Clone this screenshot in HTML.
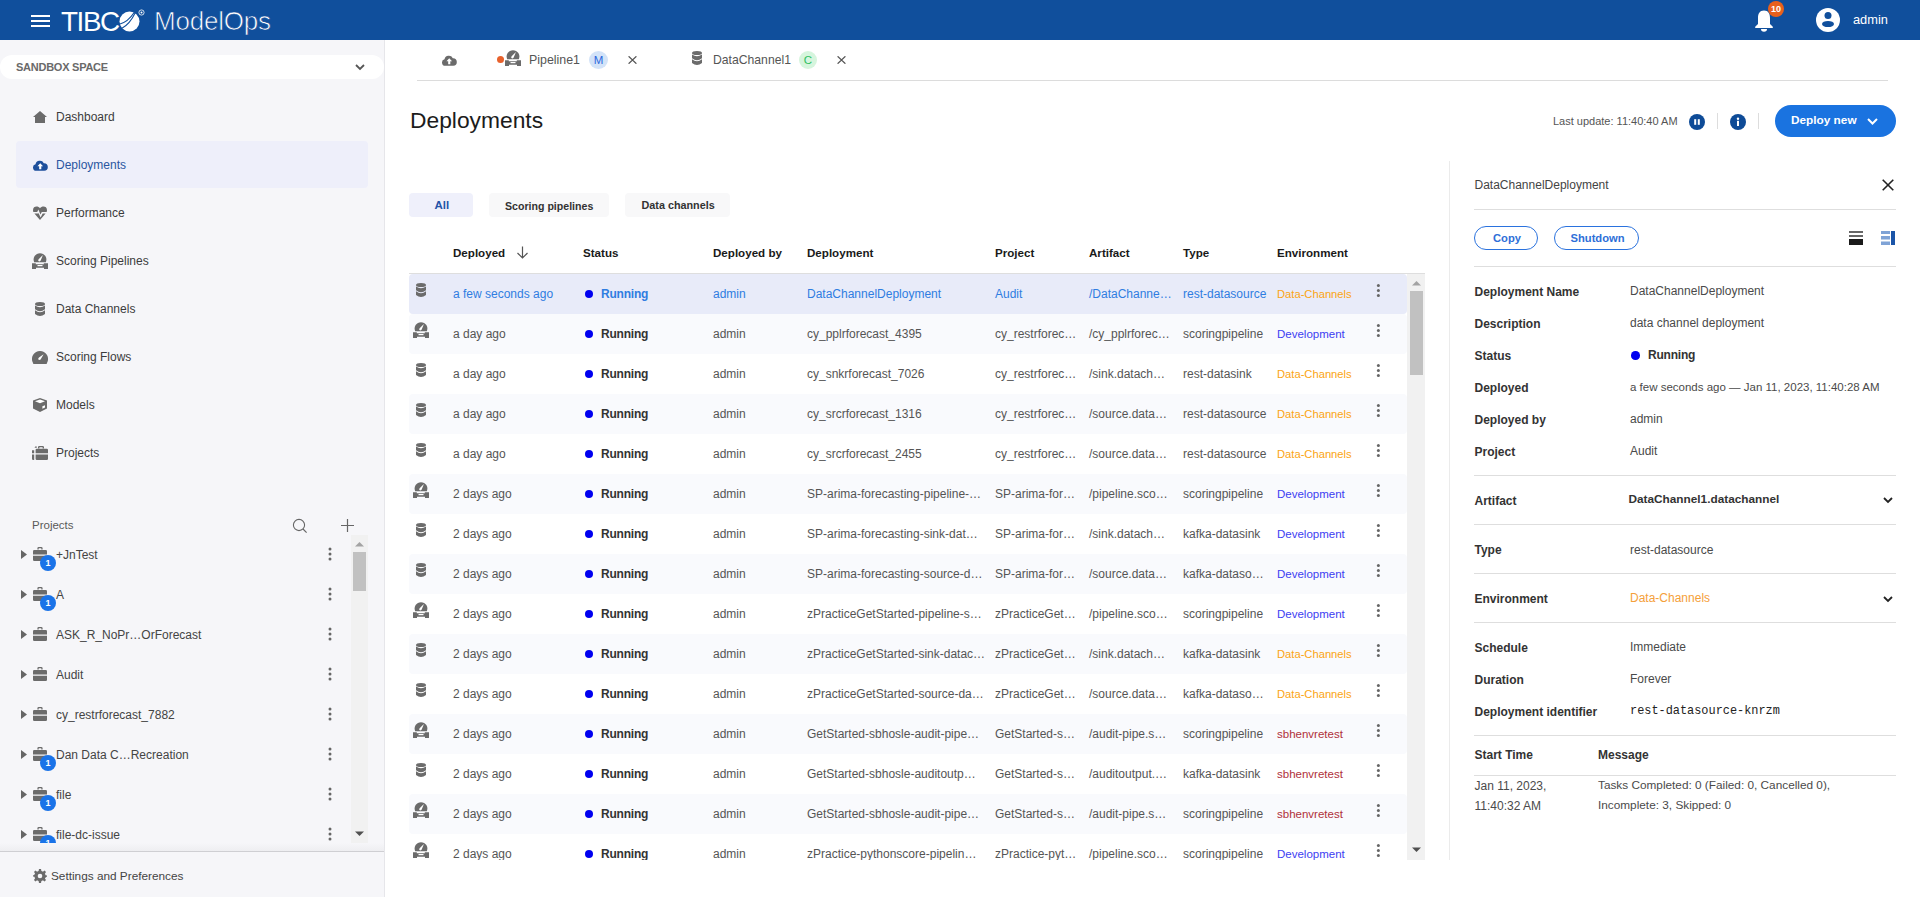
<!DOCTYPE html>
<html><head><meta charset="utf-8">
<style>
*{box-sizing:border-box;margin:0;padding:0}
html,body{width:1920px;height:897px;overflow:hidden;background:#fff;font-family:"Liberation Sans",sans-serif;color:#333}
.a{position:absolute;white-space:nowrap}
</style></head><body>
<div class="a" style="left:0;top:0;width:1920px;height:40px;background:#104f9c"></div>
<div class="a" style="left:31px;top:15px;width:19px;height:2px;background:#fff"></div>
<div class="a" style="left:31px;top:20px;width:19px;height:2px;background:#fff"></div>
<div class="a" style="left:31px;top:25px;width:19px;height:2px;background:#fff"></div>
<div class="a" style="left:61px;top:8.47px;font-size:27.8px;line-height:27.8px;font-weight:400;color:#fff;letter-spacing:-1.4px">TIBC</div>
<svg class="a" style="left:119px;top:11px" width="22" height="21" viewBox="0 0 22 21"><circle cx="10.5" cy="10.5" r="10" fill="#fff"/><path d="M0.3 13.2 Q9 11 15.3 1.2" stroke="#104f9c" stroke-width="1.1" fill="none"/><path d="M2.6 17.6 Q11 13 16.2 1.8" stroke="#104f9c" stroke-width="1.1" fill="none"/></svg>
<svg class="a" style="left:138px;top:9px" width="7" height="7" viewBox="0 0 7 7"><circle cx="3.5" cy="3.5" r="2.6" fill="none" stroke="#fff" stroke-width="0.8"/><circle cx="3.5" cy="3.5" r="1" fill="#fff"/></svg>
<div class="a" style="left:154px;top:7.99px;font-size:26px;line-height:26px;font-weight:400;color:#fff;letter-spacing:-0.2px;-webkit-text-stroke:0.7px #104f9c">ModelOps</div>
<svg class="a" style="left:1755px;top:10px" width="18" height="22" viewBox="0 0 18 22"><path fill="#fff" d="M9 0.5C4.6 0.5 3 3.8 3 8V14L0.2 16.8V18H17.8V16.8L15 14V8C15 3.8 13.4 0.5 9 0.5Z"/><path fill="#fff" d="M6 19H12Q12 21.8 9 21.8T6 19Z"/></svg>
<div class="a" style="left:1768px;top:1px;width:16px;height:16px;border-radius:50%;background:#e8601c;color:#fff;font-size:9px;font-weight:700;line-height:16px;text-align:center">10</div>
<svg class="a" style="left:1816px;top:8px" width="24" height="24" viewBox="0 0 24 24"><circle cx="12" cy="12" r="12" fill="#fff"/><circle cx="12" cy="7.6" r="3.5" fill="#104f9c"/><ellipse cx="12" cy="16" rx="6" ry="3.1" fill="#104f9c"/></svg>
<div class="a" style="left:1853px;top:14.36px;font-size:12.8px;line-height:12.8px;font-weight:400;color:#fff;">admin</div>
<div class="a" style="left:0;top:40px;width:385px;height:857px;background:#f6f6f9;border-right:1px solid #e6e6ea"></div>
<div class="a" style="left:0;top:55px;width:384px;height:24px;border-radius:12px;background:#fff"></div>
<div class="a" style="left:16px;top:61.69px;font-size:11px;line-height:11px;font-weight:700;color:#6a6a6a;letter-spacing:-0.25px">SANDBOX SPACE</div>
<svg class="a" style="left:355px;top:64px" width="10" height="7" viewBox="0 0 10 7"><path d="M1 1L5 5L9 1" stroke="#555" stroke-width="1.8" fill="none"/></svg>
<div class="a" style="left:16px;top:141px;width:352px;height:47px;border-radius:4px;background:#eeeffa"></div>
<div class="a" style="left:56px;top:110.84px;font-size:12px;line-height:12px;font-weight:400;color:#3c3c3c;">Dashboard</div>
<div class="a" style="left:56px;top:158.84px;font-size:12px;line-height:12px;font-weight:400;color:#2a56a0;">Deployments</div>
<div class="a" style="left:56px;top:206.84px;font-size:12px;line-height:12px;font-weight:400;color:#3c3c3c;">Performance</div>
<div class="a" style="left:56px;top:254.84px;font-size:12px;line-height:12px;font-weight:400;color:#3c3c3c;">Scoring Pipelines</div>
<div class="a" style="left:56px;top:302.84px;font-size:12px;line-height:12px;font-weight:400;color:#3c3c3c;">Data Channels</div>
<div class="a" style="left:56px;top:350.84px;font-size:12px;line-height:12px;font-weight:400;color:#3c3c3c;">Scoring Flows</div>
<div class="a" style="left:56px;top:398.84px;font-size:12px;line-height:12px;font-weight:400;color:#3c3c3c;">Models</div>
<div class="a" style="left:56px;top:446.84px;font-size:12px;line-height:12px;font-weight:400;color:#3c3c3c;">Projects</div>
<svg class="a" style="left:33px;top:111px" width="14" height="12" viewBox="0 0 14 12"><path fill="#6b6b6b" d="M7 0L14 6H12V12H2V6H0Z"/></svg>
<svg class="a" style="left:33px;top:160px" width="14.5" height="11" viewBox="0 0 15 11"><path fill="#1d4f9c" d="M3.4 11A3.4 3.4 0 0 1 2.6 4.3 4.6 4.6 0 0 1 11.2 3.2 3.9 3.9 0 0 1 11.6 11Z"/><path fill="#fff" d="M7.5 3.2L4.6 6.4H6.4V9.4H8.6V6.4H10.4Z"/></svg>
<svg class="a" style="left:33px;top:206px" width="14" height="14" viewBox="0 0 14 14"><path fill="#6b6b6b" d="M7 2.2C5.5 0 0 -0.5 0 4.2Q0 5.2 0.4 6H4.2L5.4 3.6L7.4 8.6L8.8 6H13.6Q14 5.2 14 4.2C14 -0.5 8.5 0 7 2.2Z"/><path fill="#6b6b6b" d="M1.4 7.4H5.3L5.5 7L7.6 11.4L9.7 7.4H12.6L7 14Z"/></svg>
<svg class="a" style="left:32px;top:253px" width="16" height="16" viewBox="0 0 16 16"><path fill="#6b6b6b" d="M2.15 9.2A6.4 6.4 0 1 1 13.85 9.2Z"/><path fill="#fff" d="M10.9 2.1L8.7 7.5Q7.6 8.9 6.4 8.1Q5.7 6.9 6.9 5.9Z"/><path fill="#6b6b6b" d="M0 10.2H3.8V11.2H11.8V10.2H16V16H12V14.8H4V16H0Z"/><rect x="5.5" y="12" width="5" height="1.2" fill="#fff"/></svg>
<svg class="a" style="left:35px;top:302px" width="10.0" height="14.0" viewBox="0 0 10 14"><ellipse cx="5" cy="2" rx="5" ry="2" fill="#6b6b6b"/><path fill="#6b6b6b" d="M0 3.4Q5 6.9 10 3.4V7.2Q5 11.2 0 7.2Z"/><path fill="#6b6b6b" d="M0 8.3Q5 12.2 10 8.3V12Q5 16 0 12Z"/></svg>
<svg class="a" style="left:32px;top:351px" width="16" height="13" viewBox="0 0 16 13"><path fill="#6b6b6b" d="M8 0A8 8 0 0 1 15.2 11.6L14.6 13H1.4L0.8 11.6A8 8 0 0 1 8 0Z"/><path fill="#fff" d="M11.6 3.2L8.6 8.6Q7 9.4 6.2 8.2Q6.2 7.2 7 6.6Z"/></svg>
<svg class="a" style="left:33px;top:398px" width="14" height="14" viewBox="0 0 14 14"><path fill="#6b6b6b" d="M7 0L14 2.6V10.6L7 14L0 10.6V2.6Z"/><path fill="#fff" d="M7 1.4L12 3.3L7 5.2L2 3.3Z"/><path fill="#fff" d="M9.4 8.2L12 7.2V9.6L9.4 10.8Z"/></svg>
<svg class="a" style="left:32px;top:446px" width="16" height="14" viewBox="0 0 16 14"><path fill="#6b6b6b" d="M6 2.6V1.3Q6 0 7.3 0H10.7Q12 0 12 1.3V2.6H10.6V1.3H7.4V2.6Z"/><path fill="#6b6b6b" d="M3.6 4Q3.6 2.8 4.8 2.8H14.8Q16 2.8 16 4V7.2H3.6Z"/><path fill="#6b6b6b" d="M3.6 8.4H16V12.8Q16 14 14.8 14H4.8Q3.6 14 3.6 12.8Z"/><path fill="#6b6b6b" d="M0 4.2H2.2V7.2H0Z M0 8.4H2.2V14H1.2Q0 14 0 12.8Z M3.2 0.6H4.8V1.8H2.6Z"/></svg>
<div class="a" style="left:32px;top:520.27px;font-size:11.5px;line-height:11.5px;font-weight:400;color:#5a5a5a;">Projects</div>
<svg class="a" style="left:292px;top:518px" width="16" height="16" viewBox="0 0 16 16"><circle cx="7" cy="7" r="5.6" stroke="#666" stroke-width="1.1" fill="none"/><path d="M11 11L14.6 14.6" stroke="#666" stroke-width="1.1"/></svg>
<svg class="a" style="left:341px;top:519px" width="13" height="13" viewBox="0 0 13 13"><path d="M6.5 0V13M0 6.5H13" stroke="#666" stroke-width="1.2"/></svg>
<div class="a" style="left:0;top:535px;width:384px;height:308px;overflow:hidden">
<svg class="a" style="left:21px;top:15px" width="6" height="9" viewBox="0 0 6 9"><path d="M0 0L6 4.5L0 9Z" fill="#666"/></svg>
<svg class="a" style="left:33px;top:12px" width="14" height="14" viewBox="0 0 14 14"><path fill="#6b6b6b" d="M4.4 2.6V1.3Q4.4 0 5.7 0H8.3Q9.6 0 9.6 1.3V2.6H8.3V1.3H5.7V2.6Z"/><path fill="#6b6b6b" d="M0 4.2Q0 2.9 1.3 2.9H12.7Q14 2.9 14 4.2V7.6H0Z"/><path fill="#6b6b6b" d="M0 8.7H14V12.7Q14 14 12.7 14H1.3Q0 14 0 12.7Z"/></svg>
<div class="a" style="left:40px;top:20px;width:16px;height:16px;border-radius:50%;background:#1a73e8;color:#fff;font-size:9px;font-weight:700;line-height:16px;text-align:center">1</div>
<div class="a" style="left:56px;top:13.84px;font-size:12px;line-height:12px;color:#444">+JnTest</div>
<svg class="a" style="left:327px;top:11px" width="6" height="16" viewBox="0 0 6 16"><g transform="translate(0.00,0.00)"><circle cx="3" cy="3" r="1.5" fill="#666"/><circle cx="3" cy="8" r="1.5" fill="#666"/><circle cx="3" cy="13" r="1.5" fill="#666"/></g></svg>
<svg class="a" style="left:21px;top:55px" width="6" height="9" viewBox="0 0 6 9"><path d="M0 0L6 4.5L0 9Z" fill="#666"/></svg>
<svg class="a" style="left:33px;top:52px" width="14" height="14" viewBox="0 0 14 14"><path fill="#6b6b6b" d="M4.4 2.6V1.3Q4.4 0 5.7 0H8.3Q9.6 0 9.6 1.3V2.6H8.3V1.3H5.7V2.6Z"/><path fill="#6b6b6b" d="M0 4.2Q0 2.9 1.3 2.9H12.7Q14 2.9 14 4.2V7.6H0Z"/><path fill="#6b6b6b" d="M0 8.7H14V12.7Q14 14 12.7 14H1.3Q0 14 0 12.7Z"/></svg>
<div class="a" style="left:40px;top:60px;width:16px;height:16px;border-radius:50%;background:#1a73e8;color:#fff;font-size:9px;font-weight:700;line-height:16px;text-align:center">1</div>
<div class="a" style="left:56px;top:53.84px;font-size:12px;line-height:12px;color:#444">A</div>
<svg class="a" style="left:327px;top:51px" width="6" height="16" viewBox="0 0 6 16"><g transform="translate(0.00,0.00)"><circle cx="3" cy="3" r="1.5" fill="#666"/><circle cx="3" cy="8" r="1.5" fill="#666"/><circle cx="3" cy="13" r="1.5" fill="#666"/></g></svg>
<svg class="a" style="left:21px;top:95px" width="6" height="9" viewBox="0 0 6 9"><path d="M0 0L6 4.5L0 9Z" fill="#666"/></svg>
<svg class="a" style="left:33px;top:92px" width="14" height="14" viewBox="0 0 14 14"><path fill="#6b6b6b" d="M4.4 2.6V1.3Q4.4 0 5.7 0H8.3Q9.6 0 9.6 1.3V2.6H8.3V1.3H5.7V2.6Z"/><path fill="#6b6b6b" d="M0 4.2Q0 2.9 1.3 2.9H12.7Q14 2.9 14 4.2V7.6H0Z"/><path fill="#6b6b6b" d="M0 8.7H14V12.7Q14 14 12.7 14H1.3Q0 14 0 12.7Z"/></svg>
<div class="a" style="left:56px;top:93.84px;font-size:12px;line-height:12px;color:#444">ASK_R_NoPr…OrForecast</div>
<svg class="a" style="left:327px;top:91px" width="6" height="16" viewBox="0 0 6 16"><g transform="translate(0.00,0.00)"><circle cx="3" cy="3" r="1.5" fill="#666"/><circle cx="3" cy="8" r="1.5" fill="#666"/><circle cx="3" cy="13" r="1.5" fill="#666"/></g></svg>
<svg class="a" style="left:21px;top:135px" width="6" height="9" viewBox="0 0 6 9"><path d="M0 0L6 4.5L0 9Z" fill="#666"/></svg>
<svg class="a" style="left:33px;top:132px" width="14" height="14" viewBox="0 0 14 14"><path fill="#6b6b6b" d="M4.4 2.6V1.3Q4.4 0 5.7 0H8.3Q9.6 0 9.6 1.3V2.6H8.3V1.3H5.7V2.6Z"/><path fill="#6b6b6b" d="M0 4.2Q0 2.9 1.3 2.9H12.7Q14 2.9 14 4.2V7.6H0Z"/><path fill="#6b6b6b" d="M0 8.7H14V12.7Q14 14 12.7 14H1.3Q0 14 0 12.7Z"/></svg>
<div class="a" style="left:56px;top:133.84px;font-size:12px;line-height:12px;color:#444">Audit</div>
<svg class="a" style="left:327px;top:131px" width="6" height="16" viewBox="0 0 6 16"><g transform="translate(0.00,0.00)"><circle cx="3" cy="3" r="1.5" fill="#666"/><circle cx="3" cy="8" r="1.5" fill="#666"/><circle cx="3" cy="13" r="1.5" fill="#666"/></g></svg>
<svg class="a" style="left:21px;top:175px" width="6" height="9" viewBox="0 0 6 9"><path d="M0 0L6 4.5L0 9Z" fill="#666"/></svg>
<svg class="a" style="left:33px;top:172px" width="14" height="14" viewBox="0 0 14 14"><path fill="#6b6b6b" d="M4.4 2.6V1.3Q4.4 0 5.7 0H8.3Q9.6 0 9.6 1.3V2.6H8.3V1.3H5.7V2.6Z"/><path fill="#6b6b6b" d="M0 4.2Q0 2.9 1.3 2.9H12.7Q14 2.9 14 4.2V7.6H0Z"/><path fill="#6b6b6b" d="M0 8.7H14V12.7Q14 14 12.7 14H1.3Q0 14 0 12.7Z"/></svg>
<div class="a" style="left:56px;top:173.84px;font-size:12px;line-height:12px;color:#444">cy_restrforecast_7882</div>
<svg class="a" style="left:327px;top:171px" width="6" height="16" viewBox="0 0 6 16"><g transform="translate(0.00,0.00)"><circle cx="3" cy="3" r="1.5" fill="#666"/><circle cx="3" cy="8" r="1.5" fill="#666"/><circle cx="3" cy="13" r="1.5" fill="#666"/></g></svg>
<svg class="a" style="left:21px;top:215px" width="6" height="9" viewBox="0 0 6 9"><path d="M0 0L6 4.5L0 9Z" fill="#666"/></svg>
<svg class="a" style="left:33px;top:212px" width="14" height="14" viewBox="0 0 14 14"><path fill="#6b6b6b" d="M4.4 2.6V1.3Q4.4 0 5.7 0H8.3Q9.6 0 9.6 1.3V2.6H8.3V1.3H5.7V2.6Z"/><path fill="#6b6b6b" d="M0 4.2Q0 2.9 1.3 2.9H12.7Q14 2.9 14 4.2V7.6H0Z"/><path fill="#6b6b6b" d="M0 8.7H14V12.7Q14 14 12.7 14H1.3Q0 14 0 12.7Z"/></svg>
<div class="a" style="left:40px;top:220px;width:16px;height:16px;border-radius:50%;background:#1a73e8;color:#fff;font-size:9px;font-weight:700;line-height:16px;text-align:center">1</div>
<div class="a" style="left:56px;top:213.84px;font-size:12px;line-height:12px;color:#444">Dan Data C…Recreation</div>
<svg class="a" style="left:327px;top:211px" width="6" height="16" viewBox="0 0 6 16"><g transform="translate(0.00,0.00)"><circle cx="3" cy="3" r="1.5" fill="#666"/><circle cx="3" cy="8" r="1.5" fill="#666"/><circle cx="3" cy="13" r="1.5" fill="#666"/></g></svg>
<svg class="a" style="left:21px;top:255px" width="6" height="9" viewBox="0 0 6 9"><path d="M0 0L6 4.5L0 9Z" fill="#666"/></svg>
<svg class="a" style="left:33px;top:252px" width="14" height="14" viewBox="0 0 14 14"><path fill="#6b6b6b" d="M4.4 2.6V1.3Q4.4 0 5.7 0H8.3Q9.6 0 9.6 1.3V2.6H8.3V1.3H5.7V2.6Z"/><path fill="#6b6b6b" d="M0 4.2Q0 2.9 1.3 2.9H12.7Q14 2.9 14 4.2V7.6H0Z"/><path fill="#6b6b6b" d="M0 8.7H14V12.7Q14 14 12.7 14H1.3Q0 14 0 12.7Z"/></svg>
<div class="a" style="left:40px;top:260px;width:16px;height:16px;border-radius:50%;background:#1a73e8;color:#fff;font-size:9px;font-weight:700;line-height:16px;text-align:center">1</div>
<div class="a" style="left:56px;top:253.84px;font-size:12px;line-height:12px;color:#444">file</div>
<svg class="a" style="left:327px;top:251px" width="6" height="16" viewBox="0 0 6 16"><g transform="translate(0.00,0.00)"><circle cx="3" cy="3" r="1.5" fill="#666"/><circle cx="3" cy="8" r="1.5" fill="#666"/><circle cx="3" cy="13" r="1.5" fill="#666"/></g></svg>
<svg class="a" style="left:21px;top:295px" width="6" height="9" viewBox="0 0 6 9"><path d="M0 0L6 4.5L0 9Z" fill="#666"/></svg>
<svg class="a" style="left:33px;top:292px" width="14" height="14" viewBox="0 0 14 14"><path fill="#6b6b6b" d="M4.4 2.6V1.3Q4.4 0 5.7 0H8.3Q9.6 0 9.6 1.3V2.6H8.3V1.3H5.7V2.6Z"/><path fill="#6b6b6b" d="M0 4.2Q0 2.9 1.3 2.9H12.7Q14 2.9 14 4.2V7.6H0Z"/><path fill="#6b6b6b" d="M0 8.7H14V12.7Q14 14 12.7 14H1.3Q0 14 0 12.7Z"/></svg>
<div class="a" style="left:40px;top:300px;width:16px;height:16px;border-radius:50%;background:#1a73e8;color:#fff;font-size:9px;font-weight:700;line-height:16px;text-align:center">1</div>
<div class="a" style="left:56px;top:293.84px;font-size:12px;line-height:12px;color:#444">file-dc-issue</div>
<svg class="a" style="left:327px;top:291px" width="6" height="16" viewBox="0 0 6 16"><g transform="translate(0.00,0.00)"><circle cx="3" cy="3" r="1.5" fill="#666"/><circle cx="3" cy="8" r="1.5" fill="#666"/><circle cx="3" cy="13" r="1.5" fill="#666"/></g></svg>
</div>
<div class="a" style="left:351px;top:535px;width:17px;height:308px;background:#f1f1f1"></div>
<svg class="a" style="left:355px;top:541px" width="9" height="6" viewBox="0 0 9 6"><path d="M0 5.5L4.5 1L9 5.5Z" fill="#a3a3a3"/></svg>
<div class="a" style="left:353px;top:552px;width:13px;height:39px;background:#c1c1c1"></div>
<svg class="a" style="left:355px;top:831px" width="9" height="6" viewBox="0 0 9 6"><path d="M0 0.5L4.5 5L9 0.5Z" fill="#505050"/></svg>
<div class="a" style="left:0;top:843px;width:384px;height:8px;background:linear-gradient(#f6f6f9,#eeeef1)"></div>
<div class="a" style="left:0;top:851px;width:384px;height:1px;background:#cfcfd3"></div>
<svg class="a" style="left:33px;top:869px" width="14" height="14" viewBox="0 0 14 14"><path fill="#6b6b6b" d="M6 0H8L8.4 2A5 5 0 0 1 9.9 2.7L11.6 1.6L13 3L11.9 4.7A5 5 0 0 1 12.6 6.2L14 6.6V7.4L12.6 8.4A5 5 0 0 1 11.9 9.4L13 11L11.6 12.4L9.9 11.3A5 5 0 0 1 8.4 12L8 14H6L5.6 12A5 5 0 0 1 4.1 11.3L2.4 12.4L1 11L2.1 9.3A5 5 0 0 1 1.4 7.8L0 7.4V6.6L1.4 5.8A5 5 0 0 1 2.1 4.6L1 3L2.4 1.6L4.1 2.7A5 5 0 0 1 5.6 2Z"/><circle cx="7" cy="7" r="2.3" fill="#f6f6f9"/></svg>
<div class="a" style="left:51px;top:871.01px;font-size:11.8px;line-height:11.8px;font-weight:400;color:#444;">Settings and Preferences</div>
<svg class="a" style="left:442px;top:55px" width="14.5" height="11" viewBox="0 0 15 11"><path fill="#6b6b6b" d="M3.4 11A3.4 3.4 0 0 1 2.6 4.3 4.6 4.6 0 0 1 11.2 3.2 3.9 3.9 0 0 1 11.6 11Z"/><path fill="#fff" d="M7.5 3.2L4.6 6.4H6.4V9.4H8.6V6.4H10.4Z"/></svg>
<div class="a" style="left:497px;top:56px;width:7px;height:7px;border-radius:50%;background:#e8612c"></div>
<svg class="a" style="left:505px;top:50px" width="16" height="16" viewBox="0 0 16 16"><path fill="#6b6b6b" d="M2.15 9.2A6.4 6.4 0 1 1 13.85 9.2Z"/><path fill="#fff" d="M10.9 2.1L8.7 7.5Q7.6 8.9 6.4 8.1Q5.7 6.9 6.9 5.9Z"/><path fill="#6b6b6b" d="M0 10.2H3.8V11.2H11.8V10.2H16V16H12V14.8H4V16H0Z"/><rect x="5.5" y="12" width="5" height="1.2" fill="#fff"/></svg>
<div class="a" style="left:529px;top:53.50px;font-size:12.4px;line-height:12.4px;font-weight:400;color:#555;">Pipeline1</div>
<div class="a" style="left:589px;top:51px;width:19px;height:18px;border-radius:50%;background:#d3e3f8;color:#2a68dd;font-size:11.5px;line-height:18px;text-align:center">M</div>
<svg class="a" style="left:628px;top:56px" width="9" height="8" viewBox="0 0 9 8"><path d="M0.6 0.3L8.4 7.7M8.4 0.3L0.6 7.7" stroke="#555" stroke-width="1.25"/></svg>
<svg class="a" style="left:692px;top:51px" width="10.0" height="14.0" viewBox="0 0 10 14"><ellipse cx="5" cy="2" rx="5" ry="2" fill="#6b6b6b"/><path fill="#6b6b6b" d="M0 3.4Q5 6.9 10 3.4V7.2Q5 11.2 0 7.2Z"/><path fill="#6b6b6b" d="M0 8.3Q5 12.2 10 8.3V12Q5 16 0 12Z"/></svg>
<div class="a" style="left:713px;top:53.67px;font-size:12.2px;line-height:12.2px;font-weight:400;color:#555;">DataChannel1</div>
<div class="a" style="left:799px;top:51px;width:18px;height:18px;border-radius:50%;background:#d6f5dd;color:#2fbf62;font-size:11.5px;line-height:18px;text-align:center">C</div>
<svg class="a" style="left:837px;top:56px" width="9" height="8" viewBox="0 0 9 8"><path d="M0.6 0.3L8.4 7.7M8.4 0.3L0.6 7.7" stroke="#555" stroke-width="1.25"/></svg>
<div class="a" style="left:417px;top:80px;width:1471px;height:1px;background:#dcdcdc"></div>
<div class="a" style="left:410px;top:109.45px;font-size:22.8px;line-height:22.8px;font-weight:400;color:#1c1c1c;">Deployments</div>
<div class="a" style="left:1553px;top:115.69px;font-size:11px;line-height:11px;font-weight:400;color:#555;">Last update: 11:40:40 AM</div>
<svg class="a" style="left:1689px;top:114px" width="16" height="16" viewBox="0 0 16 16"><circle cx="8" cy="8" r="8" fill="#0e4b97"/><rect x="5.2" y="5.2" width="2" height="5.6" fill="#fff"/><rect x="8.8" y="5.2" width="2" height="5.6" fill="#fff"/></svg>
<div class="a" style="left:1717px;top:113px;width:1px;height:16px;background:#ddd"></div>
<svg class="a" style="left:1730px;top:114px" width="16" height="16" viewBox="0 0 16 16"><circle cx="8" cy="8" r="8" fill="#0e4b97"/><circle cx="8" cy="4.7" r="1.2" fill="#fff"/><rect x="7" y="6.8" width="2" height="5.2" fill="#fff"/></svg>
<div class="a" style="left:1758px;top:113px;width:1px;height:16px;background:#ddd"></div>
<div class="a" style="left:1775px;top:105px;width:121px;height:32px;border-radius:16px;background:#1a73e0"></div>
<div class="a" style="left:1791px;top:115.01px;font-size:11.8px;line-height:11.8px;font-weight:700;color:#fff;">Deploy new</div>
<svg class="a" style="left:1867px;top:118px" width="11" height="7" viewBox="0 0 11 7"><path d="M1 1L5.5 5.5L10 1" stroke="#fff" stroke-width="2" fill="none"/></svg>
<div class="a" style="left:409px;top:193px;width:64px;height:24px;border-radius:4px;background:#eff0fb"></div>
<div class="a" style="left:434.5px;top:200.27px;font-size:11.5px;line-height:11.5px;font-weight:700;color:#2553a8;">All</div>
<div class="a" style="left:489px;top:193px;width:120px;height:24px;border-radius:4px;background:#f8f8f9"></div>
<div class="a" style="left:505px;top:200.53px;font-size:10.6px;line-height:10.6px;font-weight:700;color:#333;">Scoring pipelines</div>
<div class="a" style="left:625px;top:193px;width:105px;height:24px;border-radius:4px;background:#f8f8f9"></div>
<div class="a" style="left:641.5px;top:200.36px;font-size:10.8px;line-height:10.8px;font-weight:700;color:#333;">Data channels</div>
<div class="a" style="left:453px;top:247.18px;font-size:11.6px;line-height:11.6px;font-weight:700;color:#1a1a1a;">Deployed</div>
<div class="a" style="left:583px;top:247.18px;font-size:11.6px;line-height:11.6px;font-weight:700;color:#1a1a1a;">Status</div>
<div class="a" style="left:713px;top:247.18px;font-size:11.6px;line-height:11.6px;font-weight:700;color:#1a1a1a;">Deployed by</div>
<div class="a" style="left:807px;top:247.18px;font-size:11.6px;line-height:11.6px;font-weight:700;color:#1a1a1a;">Deployment</div>
<div class="a" style="left:995px;top:247.18px;font-size:11.6px;line-height:11.6px;font-weight:700;color:#1a1a1a;">Project</div>
<div class="a" style="left:1089px;top:247.18px;font-size:11.6px;line-height:11.6px;font-weight:700;color:#1a1a1a;">Artifact</div>
<div class="a" style="left:1183px;top:247.18px;font-size:11.6px;line-height:11.6px;font-weight:700;color:#1a1a1a;">Type</div>
<div class="a" style="left:1277px;top:247.18px;font-size:11.6px;line-height:11.6px;font-weight:700;color:#1a1a1a;">Environment</div>
<svg class="a" style="left:516px;top:246px" width="13" height="13" viewBox="0 0 13 13"><path d="M6.5 0.5V12M1.5 7L6.5 12L11.5 7" stroke="#555" stroke-width="1.2" fill="none"/></svg>
<div class="a" style="left:409px;top:273px;width:1016px;height:1px;background:#dedede"></div>
<div class="a" style="left:409px;top:274px;width:998px;height:586px;overflow:hidden">
<div class="a" style="left:0;top:0px;width:998px;height:40px;border-radius:4px;background:#e8ebf9"></div>
<svg class="a" style="left:7px;top:9px" width="10.0" height="14.0" viewBox="0 0 10 14"><ellipse cx="5" cy="2" rx="5" ry="2" fill="#6b6b6b"/><path fill="#6b6b6b" d="M0 3.4Q5 6.9 10 3.4V7.2Q5 11.2 0 7.2Z"/><path fill="#6b6b6b" d="M0 8.3Q5 12.2 10 8.3V12Q5 16 0 12Z"/></svg>
<div class="a" style="left:44px;top:13.84px;font-size:12px;line-height:12px;font-weight:400;color:#2f7de1;">a few seconds ago</div>
<div class="a" style="left:176px;top:15.5px;width:8px;height:8px;border-radius:50%;background:#0000f0"></div>
<div class="a" style="left:192px;top:13.84px;font-size:12px;line-height:12px;font-weight:700;color:#2f7de1;letter-spacing:-0.2px">Running</div>
<div class="a" style="left:304px;top:13.84px;font-size:12px;line-height:12px;font-weight:400;color:#2f7de1;">admin</div>
<div class="a" style="left:398px;top:13.84px;font-size:12px;line-height:12px;font-weight:400;color:#2f7de1;">DataChannelDeployment</div>
<div class="a" style="left:586px;top:13.84px;font-size:12px;line-height:12px;font-weight:400;color:#2f7de1;">Audit</div>
<div class="a" style="left:680px;top:13.84px;font-size:12px;line-height:12px;font-weight:400;color:#2f7de1;">/DataChanne…</div>
<div class="a" style="left:774px;top:13.84px;font-size:12px;line-height:12px;font-weight:400;color:#2f7de1;">rest-datasource</div>
<div class="a" style="left:868px;top:14.52px;font-size:11.2px;line-height:11.2px;font-weight:400;color:#fba412;">Data-Channels</div>
<svg class="a" style="left:966px;top:8px" width="6" height="16" viewBox="0 0 6 16"><g transform="translate(0.40,0.50)"><circle cx="3" cy="3" r="1.5" fill="#666"/><circle cx="3" cy="8" r="1.5" fill="#666"/><circle cx="3" cy="13" r="1.5" fill="#666"/></g></svg>
<div class="a" style="left:0;top:40px;width:998px;height:40px;border-radius:4px;background:#f9fafd"></div>
<svg class="a" style="left:4px;top:48px" width="16" height="16" viewBox="0 0 16 16"><path fill="#6b6b6b" d="M2.15 9.2A6.4 6.4 0 1 1 13.85 9.2Z"/><path fill="#fff" d="M10.9 2.1L8.7 7.5Q7.6 8.9 6.4 8.1Q5.7 6.9 6.9 5.9Z"/><path fill="#6b6b6b" d="M0 10.2H3.8V11.2H11.8V10.2H16V16H12V14.8H4V16H0Z"/><rect x="5.5" y="12" width="5" height="1.2" fill="#fff"/></svg>
<div class="a" style="left:44px;top:53.84px;font-size:12px;line-height:12px;font-weight:400;color:#555;">a day ago</div>
<div class="a" style="left:176px;top:55.5px;width:8px;height:8px;border-radius:50%;background:#0000f0"></div>
<div class="a" style="left:192px;top:53.84px;font-size:12px;line-height:12px;font-weight:700;color:#333;letter-spacing:-0.2px">Running</div>
<div class="a" style="left:304px;top:53.84px;font-size:12px;line-height:12px;font-weight:400;color:#555;">admin</div>
<div class="a" style="left:398px;top:53.84px;font-size:12px;line-height:12px;font-weight:400;color:#555;">cy_pplrforecast_4395</div>
<div class="a" style="left:586px;top:53.84px;font-size:12px;line-height:12px;font-weight:400;color:#555;">cy_restrforec…</div>
<div class="a" style="left:680px;top:53.84px;font-size:12px;line-height:12px;font-weight:400;color:#555;">/cy_pplrforec…</div>
<div class="a" style="left:774px;top:53.84px;font-size:12px;line-height:12px;font-weight:400;color:#555;">scoringpipeline</div>
<div class="a" style="left:868px;top:55.27px;font-size:11.5px;line-height:11.5px;font-weight:400;color:#3d3df2;">Development</div>
<svg class="a" style="left:966px;top:48px" width="6" height="16" viewBox="0 0 6 16"><g transform="translate(0.40,0.50)"><circle cx="3" cy="3" r="1.5" fill="#666"/><circle cx="3" cy="8" r="1.5" fill="#666"/><circle cx="3" cy="13" r="1.5" fill="#666"/></g></svg>
<svg class="a" style="left:7px;top:89px" width="10.0" height="14.0" viewBox="0 0 10 14"><ellipse cx="5" cy="2" rx="5" ry="2" fill="#6b6b6b"/><path fill="#6b6b6b" d="M0 3.4Q5 6.9 10 3.4V7.2Q5 11.2 0 7.2Z"/><path fill="#6b6b6b" d="M0 8.3Q5 12.2 10 8.3V12Q5 16 0 12Z"/></svg>
<div class="a" style="left:44px;top:93.84px;font-size:12px;line-height:12px;font-weight:400;color:#555;">a day ago</div>
<div class="a" style="left:176px;top:95.5px;width:8px;height:8px;border-radius:50%;background:#0000f0"></div>
<div class="a" style="left:192px;top:93.84px;font-size:12px;line-height:12px;font-weight:700;color:#333;letter-spacing:-0.2px">Running</div>
<div class="a" style="left:304px;top:93.84px;font-size:12px;line-height:12px;font-weight:400;color:#555;">admin</div>
<div class="a" style="left:398px;top:93.84px;font-size:12px;line-height:12px;font-weight:400;color:#555;">cy_snkrforecast_7026</div>
<div class="a" style="left:586px;top:93.84px;font-size:12px;line-height:12px;font-weight:400;color:#555;">cy_restrforec…</div>
<div class="a" style="left:680px;top:93.84px;font-size:12px;line-height:12px;font-weight:400;color:#555;">/sink.datach…</div>
<div class="a" style="left:774px;top:93.84px;font-size:12px;line-height:12px;font-weight:400;color:#555;">rest-datasink</div>
<div class="a" style="left:868px;top:94.52px;font-size:11.2px;line-height:11.2px;font-weight:400;color:#fba412;">Data-Channels</div>
<svg class="a" style="left:966px;top:88px" width="6" height="16" viewBox="0 0 6 16"><g transform="translate(0.40,0.50)"><circle cx="3" cy="3" r="1.5" fill="#666"/><circle cx="3" cy="8" r="1.5" fill="#666"/><circle cx="3" cy="13" r="1.5" fill="#666"/></g></svg>
<div class="a" style="left:0;top:120px;width:998px;height:40px;border-radius:4px;background:#f9fafd"></div>
<svg class="a" style="left:7px;top:129px" width="10.0" height="14.0" viewBox="0 0 10 14"><ellipse cx="5" cy="2" rx="5" ry="2" fill="#6b6b6b"/><path fill="#6b6b6b" d="M0 3.4Q5 6.9 10 3.4V7.2Q5 11.2 0 7.2Z"/><path fill="#6b6b6b" d="M0 8.3Q5 12.2 10 8.3V12Q5 16 0 12Z"/></svg>
<div class="a" style="left:44px;top:133.84px;font-size:12px;line-height:12px;font-weight:400;color:#555;">a day ago</div>
<div class="a" style="left:176px;top:135.5px;width:8px;height:8px;border-radius:50%;background:#0000f0"></div>
<div class="a" style="left:192px;top:133.84px;font-size:12px;line-height:12px;font-weight:700;color:#333;letter-spacing:-0.2px">Running</div>
<div class="a" style="left:304px;top:133.84px;font-size:12px;line-height:12px;font-weight:400;color:#555;">admin</div>
<div class="a" style="left:398px;top:133.84px;font-size:12px;line-height:12px;font-weight:400;color:#555;">cy_srcrforecast_1316</div>
<div class="a" style="left:586px;top:133.84px;font-size:12px;line-height:12px;font-weight:400;color:#555;">cy_restrforec…</div>
<div class="a" style="left:680px;top:133.84px;font-size:12px;line-height:12px;font-weight:400;color:#555;">/source.data…</div>
<div class="a" style="left:774px;top:133.84px;font-size:12px;line-height:12px;font-weight:400;color:#555;">rest-datasource</div>
<div class="a" style="left:868px;top:134.52px;font-size:11.2px;line-height:11.2px;font-weight:400;color:#fba412;">Data-Channels</div>
<svg class="a" style="left:966px;top:128px" width="6" height="16" viewBox="0 0 6 16"><g transform="translate(0.40,0.50)"><circle cx="3" cy="3" r="1.5" fill="#666"/><circle cx="3" cy="8" r="1.5" fill="#666"/><circle cx="3" cy="13" r="1.5" fill="#666"/></g></svg>
<svg class="a" style="left:7px;top:169px" width="10.0" height="14.0" viewBox="0 0 10 14"><ellipse cx="5" cy="2" rx="5" ry="2" fill="#6b6b6b"/><path fill="#6b6b6b" d="M0 3.4Q5 6.9 10 3.4V7.2Q5 11.2 0 7.2Z"/><path fill="#6b6b6b" d="M0 8.3Q5 12.2 10 8.3V12Q5 16 0 12Z"/></svg>
<div class="a" style="left:44px;top:173.84px;font-size:12px;line-height:12px;font-weight:400;color:#555;">a day ago</div>
<div class="a" style="left:176px;top:175.5px;width:8px;height:8px;border-radius:50%;background:#0000f0"></div>
<div class="a" style="left:192px;top:173.84px;font-size:12px;line-height:12px;font-weight:700;color:#333;letter-spacing:-0.2px">Running</div>
<div class="a" style="left:304px;top:173.84px;font-size:12px;line-height:12px;font-weight:400;color:#555;">admin</div>
<div class="a" style="left:398px;top:173.84px;font-size:12px;line-height:12px;font-weight:400;color:#555;">cy_srcrforecast_2455</div>
<div class="a" style="left:586px;top:173.84px;font-size:12px;line-height:12px;font-weight:400;color:#555;">cy_restrforec…</div>
<div class="a" style="left:680px;top:173.84px;font-size:12px;line-height:12px;font-weight:400;color:#555;">/source.data…</div>
<div class="a" style="left:774px;top:173.84px;font-size:12px;line-height:12px;font-weight:400;color:#555;">rest-datasource</div>
<div class="a" style="left:868px;top:174.52px;font-size:11.2px;line-height:11.2px;font-weight:400;color:#fba412;">Data-Channels</div>
<svg class="a" style="left:966px;top:168px" width="6" height="16" viewBox="0 0 6 16"><g transform="translate(0.40,0.50)"><circle cx="3" cy="3" r="1.5" fill="#666"/><circle cx="3" cy="8" r="1.5" fill="#666"/><circle cx="3" cy="13" r="1.5" fill="#666"/></g></svg>
<div class="a" style="left:0;top:200px;width:998px;height:40px;border-radius:4px;background:#f9fafd"></div>
<svg class="a" style="left:4px;top:208px" width="16" height="16" viewBox="0 0 16 16"><path fill="#6b6b6b" d="M2.15 9.2A6.4 6.4 0 1 1 13.85 9.2Z"/><path fill="#fff" d="M10.9 2.1L8.7 7.5Q7.6 8.9 6.4 8.1Q5.7 6.9 6.9 5.9Z"/><path fill="#6b6b6b" d="M0 10.2H3.8V11.2H11.8V10.2H16V16H12V14.8H4V16H0Z"/><rect x="5.5" y="12" width="5" height="1.2" fill="#fff"/></svg>
<div class="a" style="left:44px;top:213.84px;font-size:12px;line-height:12px;font-weight:400;color:#555;">2 days ago</div>
<div class="a" style="left:176px;top:215.5px;width:8px;height:8px;border-radius:50%;background:#0000f0"></div>
<div class="a" style="left:192px;top:213.84px;font-size:12px;line-height:12px;font-weight:700;color:#333;letter-spacing:-0.2px">Running</div>
<div class="a" style="left:304px;top:213.84px;font-size:12px;line-height:12px;font-weight:400;color:#555;">admin</div>
<div class="a" style="left:398px;top:213.84px;font-size:12px;line-height:12px;font-weight:400;color:#555;">SP-arima-forecasting-pipeline-…</div>
<div class="a" style="left:586px;top:213.84px;font-size:12px;line-height:12px;font-weight:400;color:#555;">SP-arima-for…</div>
<div class="a" style="left:680px;top:213.84px;font-size:12px;line-height:12px;font-weight:400;color:#555;">/pipeline.sco…</div>
<div class="a" style="left:774px;top:213.84px;font-size:12px;line-height:12px;font-weight:400;color:#555;">scoringpipeline</div>
<div class="a" style="left:868px;top:215.27px;font-size:11.5px;line-height:11.5px;font-weight:400;color:#3d3df2;">Development</div>
<svg class="a" style="left:966px;top:208px" width="6" height="16" viewBox="0 0 6 16"><g transform="translate(0.40,0.50)"><circle cx="3" cy="3" r="1.5" fill="#666"/><circle cx="3" cy="8" r="1.5" fill="#666"/><circle cx="3" cy="13" r="1.5" fill="#666"/></g></svg>
<svg class="a" style="left:7px;top:249px" width="10.0" height="14.0" viewBox="0 0 10 14"><ellipse cx="5" cy="2" rx="5" ry="2" fill="#6b6b6b"/><path fill="#6b6b6b" d="M0 3.4Q5 6.9 10 3.4V7.2Q5 11.2 0 7.2Z"/><path fill="#6b6b6b" d="M0 8.3Q5 12.2 10 8.3V12Q5 16 0 12Z"/></svg>
<div class="a" style="left:44px;top:253.84px;font-size:12px;line-height:12px;font-weight:400;color:#555;">2 days ago</div>
<div class="a" style="left:176px;top:255.5px;width:8px;height:8px;border-radius:50%;background:#0000f0"></div>
<div class="a" style="left:192px;top:253.84px;font-size:12px;line-height:12px;font-weight:700;color:#333;letter-spacing:-0.2px">Running</div>
<div class="a" style="left:304px;top:253.84px;font-size:12px;line-height:12px;font-weight:400;color:#555;">admin</div>
<div class="a" style="left:398px;top:253.84px;font-size:12px;line-height:12px;font-weight:400;color:#555;">SP-arima-forecasting-sink-dat…</div>
<div class="a" style="left:586px;top:253.84px;font-size:12px;line-height:12px;font-weight:400;color:#555;">SP-arima-for…</div>
<div class="a" style="left:680px;top:253.84px;font-size:12px;line-height:12px;font-weight:400;color:#555;">/sink.datach…</div>
<div class="a" style="left:774px;top:253.84px;font-size:12px;line-height:12px;font-weight:400;color:#555;">kafka-datasink</div>
<div class="a" style="left:868px;top:255.27px;font-size:11.5px;line-height:11.5px;font-weight:400;color:#3d3df2;">Development</div>
<svg class="a" style="left:966px;top:248px" width="6" height="16" viewBox="0 0 6 16"><g transform="translate(0.40,0.50)"><circle cx="3" cy="3" r="1.5" fill="#666"/><circle cx="3" cy="8" r="1.5" fill="#666"/><circle cx="3" cy="13" r="1.5" fill="#666"/></g></svg>
<div class="a" style="left:0;top:280px;width:998px;height:40px;border-radius:4px;background:#f9fafd"></div>
<svg class="a" style="left:7px;top:289px" width="10.0" height="14.0" viewBox="0 0 10 14"><ellipse cx="5" cy="2" rx="5" ry="2" fill="#6b6b6b"/><path fill="#6b6b6b" d="M0 3.4Q5 6.9 10 3.4V7.2Q5 11.2 0 7.2Z"/><path fill="#6b6b6b" d="M0 8.3Q5 12.2 10 8.3V12Q5 16 0 12Z"/></svg>
<div class="a" style="left:44px;top:293.84px;font-size:12px;line-height:12px;font-weight:400;color:#555;">2 days ago</div>
<div class="a" style="left:176px;top:295.5px;width:8px;height:8px;border-radius:50%;background:#0000f0"></div>
<div class="a" style="left:192px;top:293.84px;font-size:12px;line-height:12px;font-weight:700;color:#333;letter-spacing:-0.2px">Running</div>
<div class="a" style="left:304px;top:293.84px;font-size:12px;line-height:12px;font-weight:400;color:#555;">admin</div>
<div class="a" style="left:398px;top:293.84px;font-size:12px;line-height:12px;font-weight:400;color:#555;">SP-arima-forecasting-source-d…</div>
<div class="a" style="left:586px;top:293.84px;font-size:12px;line-height:12px;font-weight:400;color:#555;">SP-arima-for…</div>
<div class="a" style="left:680px;top:293.84px;font-size:12px;line-height:12px;font-weight:400;color:#555;">/source.data…</div>
<div class="a" style="left:774px;top:293.84px;font-size:12px;line-height:12px;font-weight:400;color:#555;">kafka-dataso…</div>
<div class="a" style="left:868px;top:295.27px;font-size:11.5px;line-height:11.5px;font-weight:400;color:#3d3df2;">Development</div>
<svg class="a" style="left:966px;top:288px" width="6" height="16" viewBox="0 0 6 16"><g transform="translate(0.40,0.50)"><circle cx="3" cy="3" r="1.5" fill="#666"/><circle cx="3" cy="8" r="1.5" fill="#666"/><circle cx="3" cy="13" r="1.5" fill="#666"/></g></svg>
<svg class="a" style="left:4px;top:328px" width="16" height="16" viewBox="0 0 16 16"><path fill="#6b6b6b" d="M2.15 9.2A6.4 6.4 0 1 1 13.85 9.2Z"/><path fill="#fff" d="M10.9 2.1L8.7 7.5Q7.6 8.9 6.4 8.1Q5.7 6.9 6.9 5.9Z"/><path fill="#6b6b6b" d="M0 10.2H3.8V11.2H11.8V10.2H16V16H12V14.8H4V16H0Z"/><rect x="5.5" y="12" width="5" height="1.2" fill="#fff"/></svg>
<div class="a" style="left:44px;top:333.84px;font-size:12px;line-height:12px;font-weight:400;color:#555;">2 days ago</div>
<div class="a" style="left:176px;top:335.5px;width:8px;height:8px;border-radius:50%;background:#0000f0"></div>
<div class="a" style="left:192px;top:333.84px;font-size:12px;line-height:12px;font-weight:700;color:#333;letter-spacing:-0.2px">Running</div>
<div class="a" style="left:304px;top:333.84px;font-size:12px;line-height:12px;font-weight:400;color:#555;">admin</div>
<div class="a" style="left:398px;top:333.84px;font-size:12px;line-height:12px;font-weight:400;color:#555;">zPracticeGetStarted-pipeline-s…</div>
<div class="a" style="left:586px;top:333.84px;font-size:12px;line-height:12px;font-weight:400;color:#555;">zPracticeGet…</div>
<div class="a" style="left:680px;top:333.84px;font-size:12px;line-height:12px;font-weight:400;color:#555;">/pipeline.sco…</div>
<div class="a" style="left:774px;top:333.84px;font-size:12px;line-height:12px;font-weight:400;color:#555;">scoringpipeline</div>
<div class="a" style="left:868px;top:335.27px;font-size:11.5px;line-height:11.5px;font-weight:400;color:#3d3df2;">Development</div>
<svg class="a" style="left:966px;top:328px" width="6" height="16" viewBox="0 0 6 16"><g transform="translate(0.40,0.50)"><circle cx="3" cy="3" r="1.5" fill="#666"/><circle cx="3" cy="8" r="1.5" fill="#666"/><circle cx="3" cy="13" r="1.5" fill="#666"/></g></svg>
<div class="a" style="left:0;top:360px;width:998px;height:40px;border-radius:4px;background:#f9fafd"></div>
<svg class="a" style="left:7px;top:369px" width="10.0" height="14.0" viewBox="0 0 10 14"><ellipse cx="5" cy="2" rx="5" ry="2" fill="#6b6b6b"/><path fill="#6b6b6b" d="M0 3.4Q5 6.9 10 3.4V7.2Q5 11.2 0 7.2Z"/><path fill="#6b6b6b" d="M0 8.3Q5 12.2 10 8.3V12Q5 16 0 12Z"/></svg>
<div class="a" style="left:44px;top:373.84px;font-size:12px;line-height:12px;font-weight:400;color:#555;">2 days ago</div>
<div class="a" style="left:176px;top:375.5px;width:8px;height:8px;border-radius:50%;background:#0000f0"></div>
<div class="a" style="left:192px;top:373.84px;font-size:12px;line-height:12px;font-weight:700;color:#333;letter-spacing:-0.2px">Running</div>
<div class="a" style="left:304px;top:373.84px;font-size:12px;line-height:12px;font-weight:400;color:#555;">admin</div>
<div class="a" style="left:398px;top:373.84px;font-size:12px;line-height:12px;font-weight:400;color:#555;">zPracticeGetStarted-sink-datac…</div>
<div class="a" style="left:586px;top:373.84px;font-size:12px;line-height:12px;font-weight:400;color:#555;">zPracticeGet…</div>
<div class="a" style="left:680px;top:373.84px;font-size:12px;line-height:12px;font-weight:400;color:#555;">/sink.datach…</div>
<div class="a" style="left:774px;top:373.84px;font-size:12px;line-height:12px;font-weight:400;color:#555;">kafka-datasink</div>
<div class="a" style="left:868px;top:374.52px;font-size:11.2px;line-height:11.2px;font-weight:400;color:#fba412;">Data-Channels</div>
<svg class="a" style="left:966px;top:368px" width="6" height="16" viewBox="0 0 6 16"><g transform="translate(0.40,0.50)"><circle cx="3" cy="3" r="1.5" fill="#666"/><circle cx="3" cy="8" r="1.5" fill="#666"/><circle cx="3" cy="13" r="1.5" fill="#666"/></g></svg>
<svg class="a" style="left:7px;top:409px" width="10.0" height="14.0" viewBox="0 0 10 14"><ellipse cx="5" cy="2" rx="5" ry="2" fill="#6b6b6b"/><path fill="#6b6b6b" d="M0 3.4Q5 6.9 10 3.4V7.2Q5 11.2 0 7.2Z"/><path fill="#6b6b6b" d="M0 8.3Q5 12.2 10 8.3V12Q5 16 0 12Z"/></svg>
<div class="a" style="left:44px;top:413.84px;font-size:12px;line-height:12px;font-weight:400;color:#555;">2 days ago</div>
<div class="a" style="left:176px;top:415.5px;width:8px;height:8px;border-radius:50%;background:#0000f0"></div>
<div class="a" style="left:192px;top:413.84px;font-size:12px;line-height:12px;font-weight:700;color:#333;letter-spacing:-0.2px">Running</div>
<div class="a" style="left:304px;top:413.84px;font-size:12px;line-height:12px;font-weight:400;color:#555;">admin</div>
<div class="a" style="left:398px;top:413.84px;font-size:12px;line-height:12px;font-weight:400;color:#555;">zPracticeGetStarted-source-da…</div>
<div class="a" style="left:586px;top:413.84px;font-size:12px;line-height:12px;font-weight:400;color:#555;">zPracticeGet…</div>
<div class="a" style="left:680px;top:413.84px;font-size:12px;line-height:12px;font-weight:400;color:#555;">/source.data…</div>
<div class="a" style="left:774px;top:413.84px;font-size:12px;line-height:12px;font-weight:400;color:#555;">kafka-dataso…</div>
<div class="a" style="left:868px;top:414.52px;font-size:11.2px;line-height:11.2px;font-weight:400;color:#fba412;">Data-Channels</div>
<svg class="a" style="left:966px;top:408px" width="6" height="16" viewBox="0 0 6 16"><g transform="translate(0.40,0.50)"><circle cx="3" cy="3" r="1.5" fill="#666"/><circle cx="3" cy="8" r="1.5" fill="#666"/><circle cx="3" cy="13" r="1.5" fill="#666"/></g></svg>
<div class="a" style="left:0;top:440px;width:998px;height:40px;border-radius:4px;background:#f9fafd"></div>
<svg class="a" style="left:4px;top:448px" width="16" height="16" viewBox="0 0 16 16"><path fill="#6b6b6b" d="M2.15 9.2A6.4 6.4 0 1 1 13.85 9.2Z"/><path fill="#fff" d="M10.9 2.1L8.7 7.5Q7.6 8.9 6.4 8.1Q5.7 6.9 6.9 5.9Z"/><path fill="#6b6b6b" d="M0 10.2H3.8V11.2H11.8V10.2H16V16H12V14.8H4V16H0Z"/><rect x="5.5" y="12" width="5" height="1.2" fill="#fff"/></svg>
<div class="a" style="left:44px;top:453.84px;font-size:12px;line-height:12px;font-weight:400;color:#555;">2 days ago</div>
<div class="a" style="left:176px;top:455.5px;width:8px;height:8px;border-radius:50%;background:#0000f0"></div>
<div class="a" style="left:192px;top:453.84px;font-size:12px;line-height:12px;font-weight:700;color:#333;letter-spacing:-0.2px">Running</div>
<div class="a" style="left:304px;top:453.84px;font-size:12px;line-height:12px;font-weight:400;color:#555;">admin</div>
<div class="a" style="left:398px;top:453.84px;font-size:12px;line-height:12px;font-weight:400;color:#555;">GetStarted-sbhosle-audit-pipe…</div>
<div class="a" style="left:586px;top:453.84px;font-size:12px;line-height:12px;font-weight:400;color:#555;">GetStarted-s…</div>
<div class="a" style="left:680px;top:453.84px;font-size:12px;line-height:12px;font-weight:400;color:#555;">/audit-pipe.s…</div>
<div class="a" style="left:774px;top:453.84px;font-size:12px;line-height:12px;font-weight:400;color:#555;">scoringpipeline</div>
<div class="a" style="left:868px;top:455.27px;font-size:11.5px;line-height:11.5px;font-weight:400;color:#b0303a;">sbhenvretest</div>
<svg class="a" style="left:966px;top:448px" width="6" height="16" viewBox="0 0 6 16"><g transform="translate(0.40,0.50)"><circle cx="3" cy="3" r="1.5" fill="#666"/><circle cx="3" cy="8" r="1.5" fill="#666"/><circle cx="3" cy="13" r="1.5" fill="#666"/></g></svg>
<svg class="a" style="left:7px;top:489px" width="10.0" height="14.0" viewBox="0 0 10 14"><ellipse cx="5" cy="2" rx="5" ry="2" fill="#6b6b6b"/><path fill="#6b6b6b" d="M0 3.4Q5 6.9 10 3.4V7.2Q5 11.2 0 7.2Z"/><path fill="#6b6b6b" d="M0 8.3Q5 12.2 10 8.3V12Q5 16 0 12Z"/></svg>
<div class="a" style="left:44px;top:493.84px;font-size:12px;line-height:12px;font-weight:400;color:#555;">2 days ago</div>
<div class="a" style="left:176px;top:495.5px;width:8px;height:8px;border-radius:50%;background:#0000f0"></div>
<div class="a" style="left:192px;top:493.84px;font-size:12px;line-height:12px;font-weight:700;color:#333;letter-spacing:-0.2px">Running</div>
<div class="a" style="left:304px;top:493.84px;font-size:12px;line-height:12px;font-weight:400;color:#555;">admin</div>
<div class="a" style="left:398px;top:493.84px;font-size:12px;line-height:12px;font-weight:400;color:#555;">GetStarted-sbhosle-auditoutp…</div>
<div class="a" style="left:586px;top:493.84px;font-size:12px;line-height:12px;font-weight:400;color:#555;">GetStarted-s…</div>
<div class="a" style="left:680px;top:493.84px;font-size:12px;line-height:12px;font-weight:400;color:#555;">/auditoutput.…</div>
<div class="a" style="left:774px;top:493.84px;font-size:12px;line-height:12px;font-weight:400;color:#555;">kafka-datasink</div>
<div class="a" style="left:868px;top:495.27px;font-size:11.5px;line-height:11.5px;font-weight:400;color:#b0303a;">sbhenvretest</div>
<svg class="a" style="left:966px;top:488px" width="6" height="16" viewBox="0 0 6 16"><g transform="translate(0.40,0.50)"><circle cx="3" cy="3" r="1.5" fill="#666"/><circle cx="3" cy="8" r="1.5" fill="#666"/><circle cx="3" cy="13" r="1.5" fill="#666"/></g></svg>
<div class="a" style="left:0;top:520px;width:998px;height:40px;border-radius:4px;background:#f9fafd"></div>
<svg class="a" style="left:4px;top:528px" width="16" height="16" viewBox="0 0 16 16"><path fill="#6b6b6b" d="M2.15 9.2A6.4 6.4 0 1 1 13.85 9.2Z"/><path fill="#fff" d="M10.9 2.1L8.7 7.5Q7.6 8.9 6.4 8.1Q5.7 6.9 6.9 5.9Z"/><path fill="#6b6b6b" d="M0 10.2H3.8V11.2H11.8V10.2H16V16H12V14.8H4V16H0Z"/><rect x="5.5" y="12" width="5" height="1.2" fill="#fff"/></svg>
<div class="a" style="left:44px;top:533.84px;font-size:12px;line-height:12px;font-weight:400;color:#555;">2 days ago</div>
<div class="a" style="left:176px;top:535.5px;width:8px;height:8px;border-radius:50%;background:#0000f0"></div>
<div class="a" style="left:192px;top:533.84px;font-size:12px;line-height:12px;font-weight:700;color:#333;letter-spacing:-0.2px">Running</div>
<div class="a" style="left:304px;top:533.84px;font-size:12px;line-height:12px;font-weight:400;color:#555;">admin</div>
<div class="a" style="left:398px;top:533.84px;font-size:12px;line-height:12px;font-weight:400;color:#555;">GetStarted-sbhosle-audit-pipe…</div>
<div class="a" style="left:586px;top:533.84px;font-size:12px;line-height:12px;font-weight:400;color:#555;">GetStarted-s…</div>
<div class="a" style="left:680px;top:533.84px;font-size:12px;line-height:12px;font-weight:400;color:#555;">/audit-pipe.s…</div>
<div class="a" style="left:774px;top:533.84px;font-size:12px;line-height:12px;font-weight:400;color:#555;">scoringpipeline</div>
<div class="a" style="left:868px;top:535.27px;font-size:11.5px;line-height:11.5px;font-weight:400;color:#b0303a;">sbhenvretest</div>
<svg class="a" style="left:966px;top:528px" width="6" height="16" viewBox="0 0 6 16"><g transform="translate(0.40,0.50)"><circle cx="3" cy="3" r="1.5" fill="#666"/><circle cx="3" cy="8" r="1.5" fill="#666"/><circle cx="3" cy="13" r="1.5" fill="#666"/></g></svg>
<svg class="a" style="left:4px;top:568px" width="16" height="16" viewBox="0 0 16 16"><path fill="#6b6b6b" d="M2.15 9.2A6.4 6.4 0 1 1 13.85 9.2Z"/><path fill="#fff" d="M10.9 2.1L8.7 7.5Q7.6 8.9 6.4 8.1Q5.7 6.9 6.9 5.9Z"/><path fill="#6b6b6b" d="M0 10.2H3.8V11.2H11.8V10.2H16V16H12V14.8H4V16H0Z"/><rect x="5.5" y="12" width="5" height="1.2" fill="#fff"/></svg>
<div class="a" style="left:44px;top:573.84px;font-size:12px;line-height:12px;font-weight:400;color:#555;">2 days ago</div>
<div class="a" style="left:176px;top:575.5px;width:8px;height:8px;border-radius:50%;background:#0000f0"></div>
<div class="a" style="left:192px;top:573.84px;font-size:12px;line-height:12px;font-weight:700;color:#333;letter-spacing:-0.2px">Running</div>
<div class="a" style="left:304px;top:573.84px;font-size:12px;line-height:12px;font-weight:400;color:#555;">admin</div>
<div class="a" style="left:398px;top:573.84px;font-size:12px;line-height:12px;font-weight:400;color:#555;">zPractice-pythonscore-pipelin…</div>
<div class="a" style="left:586px;top:573.84px;font-size:12px;line-height:12px;font-weight:400;color:#555;">zPractice-pyt…</div>
<div class="a" style="left:680px;top:573.84px;font-size:12px;line-height:12px;font-weight:400;color:#555;">/pipeline.sco…</div>
<div class="a" style="left:774px;top:573.84px;font-size:12px;line-height:12px;font-weight:400;color:#555;">scoringpipeline</div>
<div class="a" style="left:868px;top:575.27px;font-size:11.5px;line-height:11.5px;font-weight:400;color:#3d3df2;">Development</div>
<svg class="a" style="left:966px;top:568px" width="6" height="16" viewBox="0 0 6 16"><g transform="translate(0.40,0.50)"><circle cx="3" cy="3" r="1.5" fill="#666"/><circle cx="3" cy="8" r="1.5" fill="#666"/><circle cx="3" cy="13" r="1.5" fill="#666"/></g></svg>
</div>
<div class="a" style="left:1407px;top:274px;width:18px;height:586px;background:#f1f1f1"></div>
<svg class="a" style="left:1412px;top:280px" width="9" height="6" viewBox="0 0 9 6"><path d="M0 5.5L4.5 1L9 5.5Z" fill="#a3a3a3"/></svg>
<div class="a" style="left:1410px;top:291px;width:13px;height:84px;background:#c1c1c1"></div>
<svg class="a" style="left:1412px;top:847px" width="9" height="6" viewBox="0 0 9 6"><path d="M0 0.5L4.5 5L9 0.5Z" fill="#505050"/></svg>
<div class="a" style="left:1449px;top:161px;width:1px;height:699px;background:#ebebeb"></div>
<div class="a" style="left:1474.5px;top:179.34px;font-size:12px;line-height:12px;font-weight:400;color:#444;">DataChannelDeployment</div>
<svg class="a" style="left:1882px;top:179px" width="12" height="12" viewBox="0 0 12 12"><path d="M0.7 0.7L11.3 11.3M11.3 0.7L0.7 11.3" stroke="#222" stroke-width="1.6"/></svg>
<div class="a" style="left:1474px;top:209px;width:422px;height:1px;background:#dedede"></div>
<div class="a" style="left:1474px;top:226px;width:64px;height:24px;border-radius:12px;border:1px solid #2a72de"></div>
<div class="a" style="left:1493px;top:232.52px;font-size:11.2px;line-height:11.2px;font-weight:700;color:#2e6fd8;">Copy</div>
<div class="a" style="left:1554px;top:226px;width:85px;height:24px;border-radius:12px;border:1px solid #2a72de"></div>
<div class="a" style="left:1570.5px;top:232.52px;font-size:11.2px;line-height:11.2px;font-weight:700;color:#2e6fd8;">Shutdown</div>
<svg class="a" style="left:1849px;top:231px" width="14" height="14" viewBox="0 0 14 14"><rect x="0" y="0" width="14" height="2" fill="#666"/><rect x="0" y="4" width="14" height="2" fill="#666"/><rect x="0" y="8" width="14" height="6" fill="#1a1a1a"/></svg>
<svg class="a" style="left:1881px;top:231px" width="14" height="14" viewBox="0 0 14 14"><rect x="0" y="0" width="9" height="3" fill="#7fa3d6"/><rect x="0" y="5" width="9" height="3.5" fill="#7fa3d6"/><rect x="0" y="10.5" width="9" height="3.5" fill="#7fa3d6"/><rect x="10" y="0" width="4" height="14" fill="#1b55a8"/></svg>
<div class="a" style="left:1474px;top:266px;width:422px;height:1px;background:#dedede"></div>
<div class="a" style="left:1474.5px;top:286.24px;font-size:12px;line-height:12px;font-weight:700;color:#333;">Deployment Name</div>
<div class="a" style="left:1474.5px;top:318.24px;font-size:12px;line-height:12px;font-weight:700;color:#333;">Description</div>
<div class="a" style="left:1474.5px;top:350.24px;font-size:12px;line-height:12px;font-weight:700;color:#333;">Status</div>
<div class="a" style="left:1474.5px;top:382.04px;font-size:12px;line-height:12px;font-weight:700;color:#333;">Deployed</div>
<div class="a" style="left:1474.5px;top:414.04px;font-size:12px;line-height:12px;font-weight:700;color:#333;">Deployed by</div>
<div class="a" style="left:1474.5px;top:446.04px;font-size:12px;line-height:12px;font-weight:700;color:#333;">Project</div>
<div class="a" style="left:1630px;top:285.34px;font-size:12px;line-height:12px;font-weight:400;color:#4a4a4a;">DataChannelDeployment</div>
<div class="a" style="left:1630px;top:317.34px;font-size:12px;line-height:12px;font-weight:400;color:#4a4a4a;">data channel deployment</div>
<div class="a" style="left:1631px;top:351px;width:8.5px;height:8.5px;border-radius:50%;background:#0000f0"></div>
<div class="a" style="left:1648px;top:349.34px;font-size:12px;line-height:12px;font-weight:700;color:#333;letter-spacing:-0.2px">Running</div>
<div class="a" style="left:1630px;top:381.77px;font-size:11.5px;line-height:11.5px;font-weight:400;color:#4a4a4a;">a few seconds ago — Jan 11, 2023, 11:40:28 AM</div>
<div class="a" style="left:1630px;top:413.34px;font-size:12px;line-height:12px;font-weight:400;color:#4a4a4a;">admin</div>
<div class="a" style="left:1630px;top:445.34px;font-size:12px;line-height:12px;font-weight:400;color:#4a4a4a;">Audit</div>
<div class="a" style="left:1474px;top:475px;width:422px;height:1px;background:#dedede"></div>
<div class="a" style="left:1474.5px;top:494.64px;font-size:12px;line-height:12px;font-weight:700;color:#333;">Artifact</div>
<div class="a" style="left:1628.5px;top:494.01px;font-size:11.8px;line-height:11.8px;font-weight:700;color:#333;">DataChannel1.datachannel</div>
<svg class="a" style="left:1883px;top:497px" width="10" height="7" viewBox="0 0 10 7"><path d="M1 1L5 5L9 1" stroke="#222" stroke-width="1.8" fill="none"/></svg>
<div class="a" style="left:1474px;top:524px;width:422px;height:1px;background:#dedede"></div>
<div class="a" style="left:1474.5px;top:544.14px;font-size:12px;line-height:12px;font-weight:700;color:#333;">Type</div>
<div class="a" style="left:1630px;top:543.84px;font-size:12px;line-height:12px;font-weight:400;color:#4a4a4a;">rest-datasource</div>
<div class="a" style="left:1474px;top:573px;width:422px;height:1px;background:#dedede"></div>
<div class="a" style="left:1474.5px;top:593.04px;font-size:12px;line-height:12px;font-weight:700;color:#333;">Environment</div>
<div class="a" style="left:1630px;top:592.34px;font-size:12px;line-height:12px;font-weight:400;color:#f5a03a;">Data-Channels</div>
<svg class="a" style="left:1883px;top:596px" width="10" height="7" viewBox="0 0 10 7"><path d="M1 1L5 5L9 1" stroke="#222" stroke-width="1.8" fill="none"/></svg>
<div class="a" style="left:1474px;top:622px;width:422px;height:1px;background:#dedede"></div>
<div class="a" style="left:1474.5px;top:641.84px;font-size:12px;line-height:12px;font-weight:700;color:#333;">Schedule</div>
<div class="a" style="left:1630px;top:641.34px;font-size:12px;line-height:12px;font-weight:400;color:#4a4a4a;">Immediate</div>
<div class="a" style="left:1474.5px;top:673.84px;font-size:12px;line-height:12px;font-weight:700;color:#333;">Duration</div>
<div class="a" style="left:1630px;top:673.34px;font-size:12px;line-height:12px;font-weight:400;color:#4a4a4a;">Forever</div>
<div class="a" style="left:1474.5px;top:705.84px;font-size:12px;line-height:12px;font-weight:700;color:#333;">Deployment identifier</div>
<div class="a" style="left:1630px;top:705.93px;font-size:11.9px;line-height:11.9px;font-weight:400;color:#222;font-family:'Liberation Mono',monospace;">rest-datasource-knrzm</div>
<div class="a" style="left:1474px;top:735px;width:422px;height:1px;background:#dedede"></div>
<div class="a" style="left:1474.5px;top:748.84px;font-size:12px;line-height:12px;font-weight:700;color:#333;">Start Time</div>
<div class="a" style="left:1598px;top:748.84px;font-size:12px;line-height:12px;font-weight:700;color:#333;">Message</div>
<div class="a" style="left:1474px;top:775px;width:422px;height:1px;background:#dedede"></div>
<div class="a" style="left:1474.5px;top:779.84px;font-size:12px;line-height:12px;font-weight:400;color:#4a4a4a;">Jan 11, 2023,</div>
<div class="a" style="left:1474.5px;top:799.84px;font-size:12px;line-height:12px;font-weight:400;color:#4a4a4a;">11:40:32 AM</div>
<div class="a" style="left:1598px;top:780.01px;font-size:11.8px;line-height:11.8px;font-weight:400;color:#4a4a4a;">Tasks Completed: 0 (Failed: 0, Cancelled 0),</div>
<div class="a" style="left:1598px;top:800.01px;font-size:11.8px;line-height:11.8px;font-weight:400;color:#4a4a4a;">Incomplete: 3, Skipped: 0</div>
</body></html>
